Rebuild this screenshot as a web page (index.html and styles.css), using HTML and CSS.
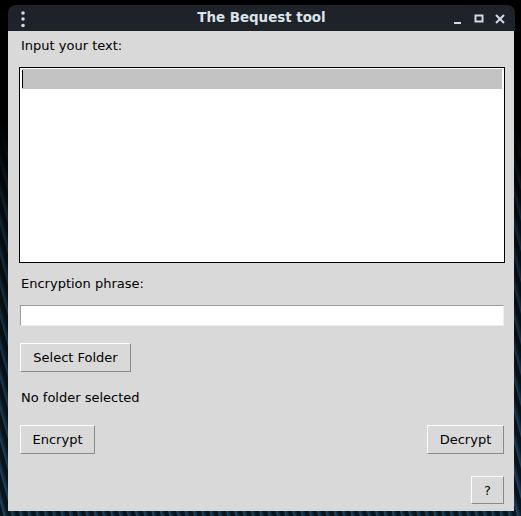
FILE: index.html
```html
<!DOCTYPE html>
<html>
<head>
<meta charset="utf-8">
<link rel="stylesheet" href="styles.css">
</head>
<body>
<div class="window">
  <div class="titlebar">
    <svg class="menu-dots" width="8" height="18" viewBox="0 0 8 18">
      <circle cx="4" cy="3" r="1.8" fill="#d3dae2"/>
      <circle cx="4" cy="9" r="1.8" fill="#d3dae2"/>
      <circle cx="4" cy="15.5" r="1.8" fill="#d3dae2"/>
    </svg>
    <div class="title">The Bequest tool</div>
    <div class="controls">
      <svg width="12" height="12" viewBox="0 0 12 12"><rect x="2" y="9" width="7" height="2" fill="#d3dae2"/></svg>
      <svg width="12" height="12" viewBox="0 0 12 12"><rect x="2.5" y="2.5" width="7" height="6" fill="none" stroke="#d3dae2" stroke-width="2"/></svg>
      <svg width="12" height="12" viewBox="0 0 12 12"><path d="M2 2 L10 10 M10 2 L2 10" stroke="#d3dae2" stroke-width="2"/></svg>
    </div>
  </div>
  <div class="content">
    <div class="label first">Input your text:</div>
    <div class="textbox">
      <div class="curline"><span class="cursor"></span></div>
    </div>
    <div class="label second">Encryption phrase:</div>
    <div class="entry"></div>
    <div class="row folder-row"><button class="btn select">Select Folder</button></div>
    <div class="label third">No folder selected</div>
    <div class="row split">
      <button class="btn encrypt">Encrypt</button>
      <button class="btn decrypt">Decrypt</button>
    </div>
    <div class="row end"><button class="btn help">?</button></div>
  </div>
</div>
</body>
</html>
```
FILE: styles.css
```css
html, body {
  margin: 0;
  padding: 0;
}
body {
  width: 521px;
  height: 516px;
  overflow: hidden;
  background:
    linear-gradient(to bottom, #000 0px, #000 120px, rgba(0,0,0,0.55) 220px, rgba(0,0,0,0.2) 516px),
    repeating-linear-gradient(75deg, #0b1a26 0px, #0b1a26 3px, #2b5674 4px, #1a3a52 6px, #0b1a26 8px);
  font-family: "DejaVu Sans", sans-serif;
}
.window {
  margin-left: 8px;
  margin-top: 5px;
  width: 506px;
}
.titlebar {
  height: 26px;
  background: #1e2229;
  border-radius: 8px 8px 0 0;
  display: flex;
  align-items: center;
  position: relative;
  width: 507px;
}
.menu-dots {
  margin-left: 11px;
  margin-top: 1px;
}
.title {
  position: absolute;
  left: 0;
  right: 0;
  text-align: center;
  color: #dce3ea;
  font-weight: bold;
  font-size: 13.4px;
  top: 5px;
  pointer-events: none;
}
.controls {
  margin-left: auto;
  margin-right: 9px;
  display: flex;
  gap: 9px;
  align-items: center;
  margin-top: 1px;
}
.controls svg { display: block; }
.content {
  height: 480px;
  background: #d9d9d9;
  box-sizing: border-box;
  padding: 0 9px 0 11px;
  display: flex;
  flex-direction: column;
}
.label {
  font-size: 13px;
  line-height: 16px;
  height: 16px;
  color: #000;
  padding-left: 2px;
}
.label.first { margin-top: 7px; }
.textbox {
  margin-top: 13px;
  height: 196px;
  border: 1px solid #000;
  box-sizing: border-box;
  background: #fff;
  padding: 1px 2px 0 2px;
}
.curline {
  height: 20px;
  background: #c3c3c3;
  position: relative;
}
.cursor {
  position: absolute;
  left: 0;
  top: 1px;
  width: 1px;
  height: 18px;
  background: #000;
}
.label.second { margin-top: 13px; }
.entry {
  margin-top: 13px;
  margin-left: 1px;
  margin-right: 1px;
  height: 21px;
  box-sizing: border-box;
  background: #fff;
  border-top: 1px solid #9a9a9a;
  border-left: 1px solid #9a9a9a;
  border-right: 1px solid #eeeeee;
  border-bottom: 1px solid #eeeeee;
}
.row {
  display: flex;
  padding-left: 1px;
  padding-right: 1px;
}
.btn {
  font-family: "DejaVu Sans", sans-serif;
  font-size: 13px;
  height: 29px;
  box-sizing: border-box;
  background: #d9d9d9;
  color: #000;
  border-top: 1px solid #ffffff;
  border-left: 1px solid #ffffff;
  border-right: 1px solid #8a8a8a;
  border-bottom: 1px solid #8a8a8a;
  padding: 0;
  margin: 0;
}
.folder-row { margin-top: 17px; }
.select { width: 111px; }
.label.third { margin-top: 18px; }
.split {
  margin-top: 19px;
  justify-content: space-between;
}
.encrypt { width: 75px; }
.decrypt { width: 77px; }
.end {
  justify-content: flex-end;
  margin-top: 22px;
}
.help { width: 33px; height: 28px; }
```
